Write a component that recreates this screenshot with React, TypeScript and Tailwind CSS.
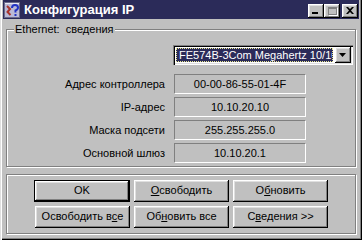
import React from 'react';

// Диалог "Конфигурация IP" в стиле Windows 98

const raised =
  'shadow-[inset_-1px_-1px_0_#000,inset_1px_1px_0_#fff,inset_-2px_-2px_0_#808080,inset_2px_2px_0_#dfdfdf]';
const etched = 'border border-[#808080] shadow-[inset_1px_1px_0_#fff,1px_1px_0_#fff]';

const rows = [
  { label: 'Адрес контроллера', value: '00-00-86-55-01-4F' },
  { label: 'IP-адрес', value: '10.10.20.10' },
  { label: 'Маска подсети', value: '255.255.255.0' },
  { label: 'Основной шлюз', value: '10.10.20.1' },
];

const Btn = ({ children, primary }: { children: React.ReactNode; primary?: boolean }) => (
  <div className={`h-[22px] ${primary ? 'w-[96px] border border-black' : 'w-[95px]'}`}>
    <div className={`flex h-full w-full items-center justify-center pb-[1px] ${raised}`}>{children}</div>
  </div>
);

const CapBtn = ({ children, className = '' }: { children: React.ReactNode; className?: string }) => (
  <div className={`relative h-[14px] w-[16px] bg-[#c0c0c0] ${raised} ${className}`}>{children}</div>
);

const AppIcon = () => (
  <svg width="16" height="16" viewBox="0 0 16 16">
    <rect x="0.5" y="0.5" width="15" height="15" fill="#b9b9d6" stroke="#6a6a8a" />
    <rect x="1" y="1" width="14" height="1" fill="#e8e8f4" />
    <path d="M3 4 L6 7 L3.5 10 L6.5 13" fill="none" stroke="#a8342c" strokeWidth="2" />
    <path d="M8 6 Q8 3 11 3 Q14 3 14 5.5 Q14 7.5 11.5 8.5 L11.5 10.5" fill="none" stroke="#2233c4" strokeWidth="2" />
    <rect x="10.5" y="12" width="2" height="2" fill="#2233c4" />
  </svg>
);

export default function App() {
  return (
    <div
      className="flex h-[240px] w-[362px] flex-col bg-[#c0c0c0] text-[11px] text-black shadow-[inset_1px_0_0_#dfdfdf,inset_2px_0_0_#fff,inset_-1px_-1px_0_#000,inset_-2px_-2px_0_#808080]"
      style={{ fontFamily: '"Liberation Sans", Arial, sans-serif' }}
    >
      {/* Заголовок окна */}
      <div className="mx-[3px] flex h-[19px] items-start bg-[#2b2b59] pl-[1px] pr-[1px]">
        <div className="mt-[2px]">
          <AppIcon />
        </div>
        <div className="ml-[4px] mt-[2px] text-[13px] font-bold leading-[15px] text-white">Конфигурация IP</div>
        <div className="ml-auto mt-[4px] flex">
          <CapBtn>
            <div className="absolute left-[4px] top-[8px] h-[2px] w-[6px] bg-black" />
          </CapBtn>
          <CapBtn>
            <div className="absolute left-[4px] top-[3px] h-[8px] w-[9px] border border-t-2 border-[#808080] shadow-[1px_1px_0_#fff]" />
          </CapBtn>
          <CapBtn className="ml-[2px]">
            <svg className="absolute left-[4px] top-[3px]" width="8" height="7" viewBox="0 0 8 7">
              <path d="M0 0h2l2 2 2-2h2L5 3.5 8 7H6L4 5 2 7H0l3-3.5z" fill="#000" />
            </svg>
          </CapBtn>
        </div>
      </div>

      {/* Ethernet: сведения */}
      <div className={`relative ml-[6px] mt-[10px] h-[138px] w-[350px] ${etched}`}>
        <div className="absolute -top-[8px] left-[7px] bg-[#c0c0c0] px-[1px] leading-[14px] whitespace-pre">
          Ethernet:  сведения
        </div>

        <div className="ml-[166px] mt-[15px] flex h-[20px] w-[180px] bg-white p-[2px] shadow-[inset_1px_1px_0_#808080,inset_2px_2px_0_#000,inset_-1px_-1px_0_#fff,inset_-2px_-2px_0_#dfdfdf]">
          <div className="m-[1px] mr-[2px] flex min-w-0 flex-1 items-center overflow-hidden border border-dotted border-[#e8e890] bg-[#2b2b59] pl-[2px] leading-[13px] whitespace-nowrap text-white">
            FE574B-3Com Megahertz 10/100
          </div>
          <div className={`relative h-[16px] w-[16px] shrink-0 bg-[#c0c0c0] ${raised}`}>
            <svg className="absolute left-[4px] top-[6px]" width="7" height="4" viewBox="0 0 7 4">
              <path d="M0 0h7L3.5 4z" fill="#000" />
            </svg>
          </div>
        </div>

        <div className="mt-[9px] flex flex-col gap-[3px]">
          {rows.map((r) => (
            <div key={r.label} className="flex h-[20px] items-center">
              <div className="w-[158px] text-right">{r.label}</div>
              <div className="ml-[9px] flex h-[20px] w-[132px] items-center justify-center border border-t-[#808080] border-l-[#808080] border-r-white border-b-white">
                {r.value}
              </div>
            </div>
          ))}
        </div>
      </div>

      {/* Кнопки */}
      <div className={`ml-[6px] mt-[7px] flex h-[60px] w-[350px] flex-col items-center gap-[4px] pt-[5px] ${etched}`}>
        <div className="flex gap-[3px]">
          <Btn primary>OK</Btn>
          <div className="ml-[1px]">
            <Btn>
              <span><u>О</u>свободить</span>
            </Btn>
          </div>
          <div className="ml-[1px]">
            <Btn>
              <span>О<u>б</u>новить</span>
            </Btn>
          </div>
        </div>
        <div className="flex gap-[4px] pl-[1px]">
          <Btn>
            <span>Освободить в<u>с</u>е</span>
          </Btn>
          <Btn>
            <span>Об<u>н</u>овить все</span>
          </Btn>
          <Btn>
            <span>С<u>в</u>едения &gt;&gt;</span>
          </Btn>
        </div>
      </div>
    </div>
  );
}
